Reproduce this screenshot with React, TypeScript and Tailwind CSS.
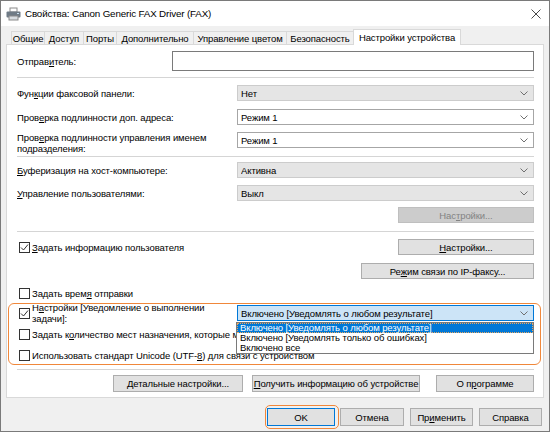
import React from "react";

const Chevron = () => (
  <svg width="8" height="5" viewBox="0 0 8 5" className="shrink-0">
    <path d="M0.5 0.5 L4 4 L7.5 0.5" fill="none" stroke="#707070" strokeWidth="1" />
  </svg>
);

function Combo({ value, tone = "white" }: { value: string; tone?: "white" | "grey" | "focus" }) {
  const cls =
    tone === "grey"
      ? "bg-[#e5e5e5] border-[#cccccc]"
      : tone === "focus"
      ? "bg-[#cce4f7] border-[#0078d7]"
      : "bg-white border-[#a6a6a6]";
  return (
    <div className={`w-[297px] h-[16px] border ${cls} flex items-center pl-[3px] pr-[5px] shrink-0`}>
      <span className="flex-1 truncate">{value}</span>
      <Chevron />
    </div>
  );
}

function Btn({
  children,
  className = "",
  disabled,
}: {
  children: React.ReactNode;
  className?: string;
  disabled?: boolean;
}) {
  return (
    <button
      className={`border flex items-center justify-center shrink-0 ${
        disabled ? "bg-[#cccccc] border-[#bfbfbf] text-[#838383]" : "bg-[#e1e1e1] border-[#adadad]"
      } ${className}`}
    >
      {children}
    </button>
  );
}

function Check({ checked }: { checked?: boolean }) {
  return (
    <span className="w-[11px] h-[11px] border border-[#333333] bg-white shrink-0 flex items-center justify-center">
      {checked && (
        <svg width="9" height="9" viewBox="0 0 9 9">
          <path d="M1 4.5 L3.5 7 L8 1.5" fill="none" stroke="#333333" strokeWidth="1" />
        </svg>
      )}
    </span>
  );
}

const Sep = ({ className = "" }: { className?: string }) => (
  <div className={`h-px bg-[#d5d5d5] shrink-0 ${className}`} />
);

const tabs = [
  { label: "Общие", w: "w-[33px]" },
  { label: "Доступ", w: "w-[39px]" },
  { label: "Порты", w: "w-[33px]" },
  { label: "Дополнительно", w: "w-[77px]" },
  { label: "Управление цветом", w: "w-[93px]" },
  { label: "Безопасность", w: "w-[67px]" },
];

export default function App() {
  return (
    <div className="relative w-[550px] h-[432px] overflow-hidden bg-[#f0f0f0] border border-[#7a7a7a] flex flex-col text-[9.5px] tracking-[-0.1px] text-black font-['Liberation_Sans',Arial,sans-serif] leading-[11px]">
      {/* заголовок окна */}
      <div className="h-[25px] bg-white flex items-center pl-[5px] pr-[8px] shrink-0">
        <svg width="15" height="14" viewBox="0 0 15 14" className="shrink-0">
          <rect x="4" y="1" width="7" height="4" fill="#ffffff" stroke="#8a8a8a" />
          <rect x="0.5" y="4.5" width="14" height="6" rx="1" fill="#6f7b86" />
          <rect x="3" y="9" width="9" height="4" fill="#d8dde2" stroke="#8a8a8a" />
          <rect x="11" y="6" width="2" height="1" fill="#c8e0f0" />
        </svg>
        <span className="ml-[4px] text-[9.8px] tracking-[-0.15px]">Свойства: Canon Generic FAX Driver (FAX)</span>
        <div className="flex-1" />
        <svg width="10" height="10" viewBox="0 0 10 10">
          <path d="M0.5 0.5 L9.5 9.5 M9.5 0.5 L0.5 9.5" stroke="#333333" strokeWidth="0.9" />
        </svg>
      </div>

      {/* вкладки */}
      <div className="flex items-end h-[18px] pl-[10px] shrink-0">
        {tabs.map((t) => (
          <div
            key={t.label}
            className={`${t.w} h-[13px] border-t border-l border-[#d9d9d9] bg-[#f0f0f0] flex items-center justify-center`}
          >
            {t.label}
          </div>
        ))}
        <div className="w-[108px] h-[16px] mb-[-1px] border-t border-l border-r border-[#d9d9d9] bg-white flex items-center justify-center relative z-10">
          Настройки устройства
        </div>
      </div>

      {/* панель вкладки */}
      <div className="ml-[5px] w-[538px] h-[354px] bg-white border border-[#d9d9d9] pl-[10px] pr-[9px] flex flex-col shrink-0">
        <div className="mt-[6px] h-[20px] flex items-center">
          <span className="flex-1">
            Отправ<u>и</u>тель:
          </span>
          <div className="w-[362px] h-[20px] border border-[#7a7a7a] bg-white" />
        </div>
        <Sep className="mt-[6px]" />

        <div className="mt-[7px] flex items-center">
          <span className="flex-1">
            Фун<u>к</u>ции факсовой панели:
          </span>
          <Combo value="Нет" tone="grey" />
        </div>
        <div className="mt-[8px] flex items-center">
          <span className="flex-1">
            Пров<u>е</u>рка подлинности доп. адреса:
          </span>
          <Combo value="Режим 1" />
        </div>
        <div className="mt-[7px] h-[22px] flex items-start">
          <span className="flex-1">
            Пров<u>е</u>рка подлинности управления именем
            <br />
            подразделения:
          </span>
          <Combo value="Режим 1" />
        </div>
        <Sep className="mt-[2px]" />

        <div className="mt-[5px] flex items-center">
          <span className="flex-1">
            <u>Б</u>уферизация на хост-компьютере:
          </span>
          <Combo value="Активна" tone="grey" />
        </div>
        <div className="mt-[7px] flex items-center">
          <span className="flex-1">
            <u>У</u>правление пользователями:
          </span>
          <Combo value="Выкл" tone="grey" />
        </div>
        <div className="mt-[6px] flex justify-end">
          <Btn disabled className="w-[136px] h-[16px]">
            Нас<u>т</u>ройки...
          </Btn>
        </div>
        <Sep className="mt-[8px]" />

        <div className="mt-[7px] flex items-center h-[16px]">
          <div className="pl-[2px] flex items-center gap-[2px] flex-1">
            <Check checked />
            <span>
              <u>З</u>адать информацию пользователя
            </span>
          </div>
          <Btn className="w-[136px] h-[16px]">
            <u>Н</u>астройки...
          </Btn>
        </div>
        <div className="mt-[8px] flex justify-end">
          <Btn className="w-[173px] h-[16px]">
            Ре<u>ж</u>им связи по IP-факсу...
          </Btn>
        </div>

        <div className="mt-[8px] h-[12px] pl-[2px] flex items-center gap-[2px]">
          <Check />
          <span>
            Задать врем<u>я</u> отправки
          </span>
        </div>

        <div className="mt-[3px] h-[22px] flex items-center">
          <div className="pl-[2px] flex items-center gap-[2px] flex-1">
            <Check checked />
            <span>
              Н<u>а</u>стройки [Уведомление о выполнении
              <br />
              задачи]:
            </span>
          </div>
          <div className="self-start mt-[3px]">
            <Combo value="Включено [Уведомлять о любом результате]" tone="focus" />
          </div>
        </div>

        <div className="mt-[4px] h-[12px] pl-[2px] flex items-center gap-[2px]">
          <Check />
          <span className="whitespace-nowrap">
            Задать к<u>о</u>личество мест назначения, которые можно указать
          </span>
        </div>
        <div className="mt-[9px] h-[12px] pl-[2px] flex items-center gap-[2px]">
          <Check />
          <span className="whitespace-nowrap">
            Использовать стандарт Unicode (UTF-<u>8</u>) для связи с устройством
          </span>
        </div>
        <Sep className="mt-[8px]" />

        <div className="mt-[5px] flex justify-end">
          <Btn className="w-[130px] h-[17px]">
            <u>Д</u>етальные настройки...
          </Btn>
          <Btn className="ml-[9px] w-[168px] h-[17px]">
            <u>П</u>олучить информацию об устройстве
          </Btn>
          <Btn className="ml-[16px] w-[98px] h-[17px]">
            О п<u>р</u>ограмме
          </Btn>
        </div>
      </div>

      {/* кнопки диалога */}
      <div className="mt-[10px] flex justify-end pr-[7px]">
        <Btn className="w-[68px] h-[18px] !border-[#0078d7]">OK</Btn>
        <Btn className="ml-[5px] w-[64px] h-[18px]">Отмена</Btn>
        <Btn className="ml-[6px] w-[63px] h-[18px]">
          Пр<u>и</u>менить
        </Btn>
        <Btn className="ml-[6px] w-[63px] h-[18px]">Справка</Btn>
      </div>

      {/* раскрытый список */}
      <div className="absolute left-[235px] top-[321px] w-[298px] h-[32px] bg-white border border-[#7a7a7a] z-20 flex flex-col leading-[10px]">
        <div className="h-[10px] bg-[#0078d7] text-white pl-[2px] flex items-center border border-dotted border-[#e8a862]">
          Включено [Уведомлять о любом результате]
        </div>
        <div className="h-[10px] pl-[3px] flex items-center">Включено [Уведомлять только об ошибках]</div>
        <div className="h-[10px] pl-[3px] flex items-center">Включено все</div>
      </div>

      {/* выделения */}
      <div className="absolute left-[7px] top-[302px] w-[533px] h-[62px] rounded-[6px] border-[1.5px] border-[#f0873a] z-30 pointer-events-none" />
      <div className="absolute left-[264px] top-[404px] w-[74px] h-[24px] rounded-[5px] border-[1.5px] border-[#f0873a] z-30 pointer-events-none" />
    </div>
  );
}
